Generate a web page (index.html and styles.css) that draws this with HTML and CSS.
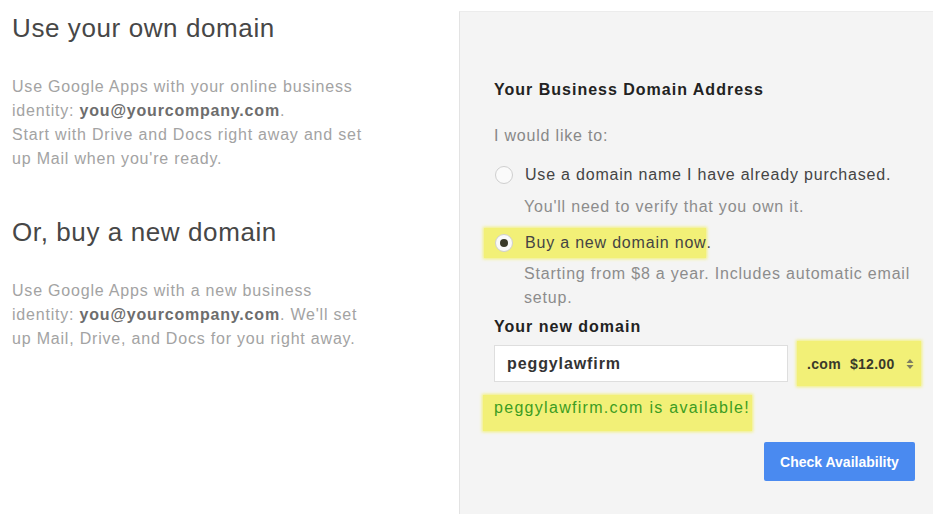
FILE: index.html
```html
<!DOCTYPE html>
<html>
    <head>
        <title>Your Business Domain</title>
        <meta charset="UTF-8">
        <meta name="viewport" content="width=device-width, initial-scale=1.0">
        <link rel="stylesheet" href="styles.css">
    </head>
    <body>
        <div class="page">
            <div class="intro">
                <h1 class="intro-title">Use your own domain</h1>
                <p class="intro-text">
                    Use Google Apps with your online business<br>
                    identity: <b>you@yourcompany.com</b>.<br>
                    Start with Drive and Docs right away and set<br>
                    up Mail when you're ready.
                </p>

                <h1 class="intro-title second">Or, buy a new domain</h1>
                <p class="intro-text">
                    Use Google Apps with a new business<br>
                    identity: <b>you@yourcompany.com</b>. We'll set<br>
                    up Mail, Drive, and Docs for you right away.
                </p>
            </div>

            <form class="panel" name="domainForm">
                <h2 class="panel-title">Your Business Domain Address</h2>
                <p class="lead">I would like to:</p>

                <div class="option">
                    <label class="option-label">
                        <span class="radio"></span>
                        Use a domain name I have already purchased.
                    </label>
                    <p class="hint">You'll need to verify that you own it.</p>
                </div>

                <div class="option option-buy">
                    <label class="option-label">
                        <span class="marker marker-option">
                            <span class="radio checked"></span>
                            Buy a new domain now</span>.
                    </label>
                    <p class="hint">
                        Starting from $8 a year. Includes automatic email<br>
                        setup.
                    </p>
                </div>

                <h3 class="field-title">Your new domain</h3>
                <div class="domain-row">
                    <div class="domain-input">peggylawfirm</div>
                    <div class="marker domain-select">
                        <span>.com</span>
                        <span>$12.00</span>
                        <svg class="arrows" width="8" height="12" viewBox="0 0 8 12">
                            <path d="M4 1 L7.5 5 L0.5 5 Z" fill="#7d7d62"/>
                            <path d="M4 11 L7.5 7 L0.5 7 Z" fill="#7d7d62"/>
                        </svg>
                    </div>
                </div>

                <p class="result"><span class="marker marker-result">peggylawfirm.com is available!</span></p>

                <div class="actions">
                    <button type="button" class="check-button">Check Availability</button>
                </div>
            </form>
        </div>
    </body>
</html>
```

FILE: styles.css
```css
body
{
    margin: 0;
    background: white;
    font-family: "Liberation Sans", Arial, sans-serif;
}
.page
{
    display: flex;
    height: 514px;
    overflow: hidden;
}

/* left column */
.intro
{
    width: 459px;
    padding-left: 12px;
    box-sizing: border-box;
}
.intro-title
{
    margin: 13px 0 0 0;
    font-size: 26px;
    line-height: 30px;
    font-weight: normal;
    letter-spacing: 0.6px;
    color: #474747;
}
.intro-title.second
{
    margin-top: 46px;
}
.intro-text
{
    margin: 32px 0 0 0;
    font-size: 16px;
    line-height: 24px;
    letter-spacing: 0.8px;
    color: #a3a3a3;
}
.intro-text b
{
    color: #6d6d6d;
}

/* right panel */
.panel
{
    flex: 1;
    margin: 11px 0 0 0;
    padding: 66px 12px 0 34px;
    background: #f4f4f4;
    border-left: 1px solid #e3e3e3;
    border-top: 1px solid #ececec;
    font-size: 16px;
    line-height: 24px;
    letter-spacing: 0.8px;
}
.panel-title
{
    margin: 0;
    font-size: 16px;
    line-height: 24px;
    letter-spacing: 1px;
    color: #222;
}
.lead
{
    margin: 22px 0 0 0;
    color: #888;
}
.option
{
    margin-top: 15px;
}
.option-buy
{
    margin-top: 12px;
}
.option-label
{
    display: flex;
    align-items: center;
    color: #444;
}
.radio
{
    display: inline-block;
    width: 16px;
    height: 16px;
    margin: 0 12px 0 1px;
    border: 1px solid #cfcfcf;
    border-radius: 50%;
    background: #fafafa;
    position: relative;
    flex: none;
}
.radio.checked::after
{
    content: "";
    position: absolute;
    left: 4px;
    top: 4px;
    width: 8px;
    height: 8px;
    border-radius: 50%;
    background: #3a3a2a;
}
.hint
{
    margin: 8px 0 0 30px;
    color: #8c8c8c;
}
.option-buy .hint
{
    margin-top: 7px;
}

/* highlighter marks */
.marker
{
    background: #f2f077;
    box-shadow: 0 0 3px 1px #f2f077;
}
.marker-option
{
    display: flex;
    align-items: center;
    margin: -3px 0 -3px -10px;
    padding: 3px 0 3px 10px;
}

.field-title
{
    margin: 5px 0 0 0;
    font-size: 16px;
    line-height: 24px;
    letter-spacing: 1px;
    color: #222;
}
.domain-row
{
    display: flex;
    align-items: center;
    gap: 9px;
    margin-top: 2px;
    height: 45px;
}
.domain-input
{
    width: 294px;
    height: 37px;
    box-sizing: border-box;
    padding-left: 12px;
    background: white;
    border: 1px solid #dedede;
    font-weight: bold;
    line-height: 35px;
    letter-spacing: 0.9px;
    color: #333;
}
.domain-select
{
    display: flex;
    align-items: center;
    gap: 9px;
    width: 124px;
    height: 45px;
    box-sizing: border-box;
    padding-left: 10px;
    font-size: 14px;
    font-weight: bold;
    letter-spacing: 0.3px;
    color: #3a3a2a;
}
.arrows
{
    margin-left: 2px;
}
.result
{
    margin: 9px 0 0 0;
}
.marker-result
{
    display: inline-block;
    margin-left: -11px;
    padding: 1px 2px 11px 11px;
    color: #3d9d22;
    letter-spacing: 1.3px;
}
.actions
{
    display: flex;
    justify-content: flex-end;
    margin-top: 11px;
    padding-right: 6px;
}
.check-button
{
    width: 151px;
    height: 39px;
    border: 0;
    border-radius: 2px;
    background: #4a8af0;
    color: white;
    font-family: "Liberation Sans", Arial, sans-serif;
    font-size: 14px;
    font-weight: bold;
}
```
